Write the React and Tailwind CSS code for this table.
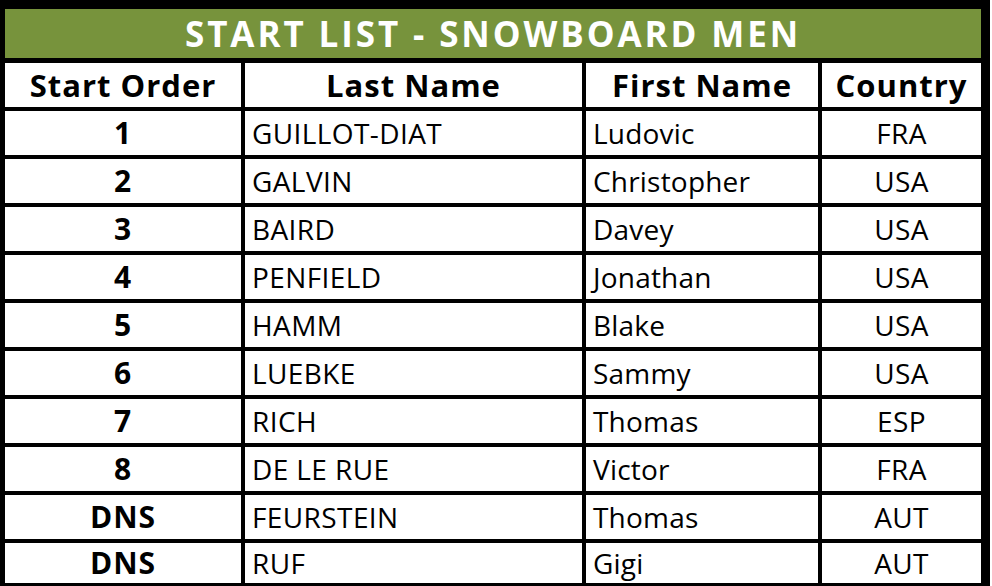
const rows = [
  { order: "1", last: "GUILLOT-DIAT", first: "Ludovic", country: "FRA" },
  { order: "2", last: "GALVIN", first: "Christopher", country: "USA" },
  { order: "3", last: "BAIRD", first: "Davey", country: "USA" },
  { order: "4", last: "PENFIELD", first: "Jonathan", country: "USA" },
  { order: "5", last: "HAMM", first: "Blake", country: "USA" },
  { order: "6", last: "LUEBKE", first: "Sammy", country: "USA" },
  { order: "7", last: "RICH", first: "Thomas", country: "ESP" },
  { order: "8", last: "DE LE RUE", first: "Victor", country: "FRA" },
  { order: "DNS", last: "FEURSTEIN", first: "Thomas", country: "AUT" },
  { order: "DNS", last: "RUF", first: "Gigi", country: "AUT" },
]

export default function App() {
  return (
    <div className="w-[992px] h-[586px] bg-white overflow-hidden font-['Open_Sans',sans-serif] text-black">
      <div className="w-[990px] h-[586px] bg-black pt-[9px] pl-[5px]">
        {/* Title bar */}
        <div className="w-[976px] h-[49px] bg-[#77933c] flex items-center justify-center">
          <span className="text-white font-bold text-[35px] tracking-[2.9px] leading-none">START LIST - SNOWBOARD MEN</span>
        </div>

        <div className="mt-[5px] w-[976px] grid grid-cols-[236px_337px_232px_159px] gap-[4px]">
          {/* Header */}
          {["Start Order", "Last Name", "First Name", "Country"].map((h) => (
            <div key={h} className="h-[44px] bg-white flex items-center justify-center font-bold text-[31px] tracking-[1px] leading-none">
              {h}
            </div>
          ))}

          {/* Rows */}
          {rows.map((r, i) => {
            const h = i === rows.length - 1 ? "h-[40px]" : "h-[44px]"
            return [
              <div key={i + "o"} className={`${h} bg-white flex items-center justify-center font-bold text-[30px] tracking-[1px] leading-none`}>
                {r.order}
              </div>,
              <div key={i + "l"} className={`${h} bg-white flex items-center pl-[7px] text-[28px] tracking-[0.4px] leading-none`}>
                {r.last}
              </div>,
              <div key={i + "f"} className={`${h} bg-white flex items-center pl-[7px] text-[28px] tracking-[0.2px] leading-none`}>
                {r.first}
              </div>,
              <div key={i + "c"} className={`${h} bg-white flex items-center justify-center text-[28px] tracking-[0.4px] leading-none`}>
                {r.country}
              </div>,
            ]
          })}
        </div>
      </div>
    </div>
  )
}
